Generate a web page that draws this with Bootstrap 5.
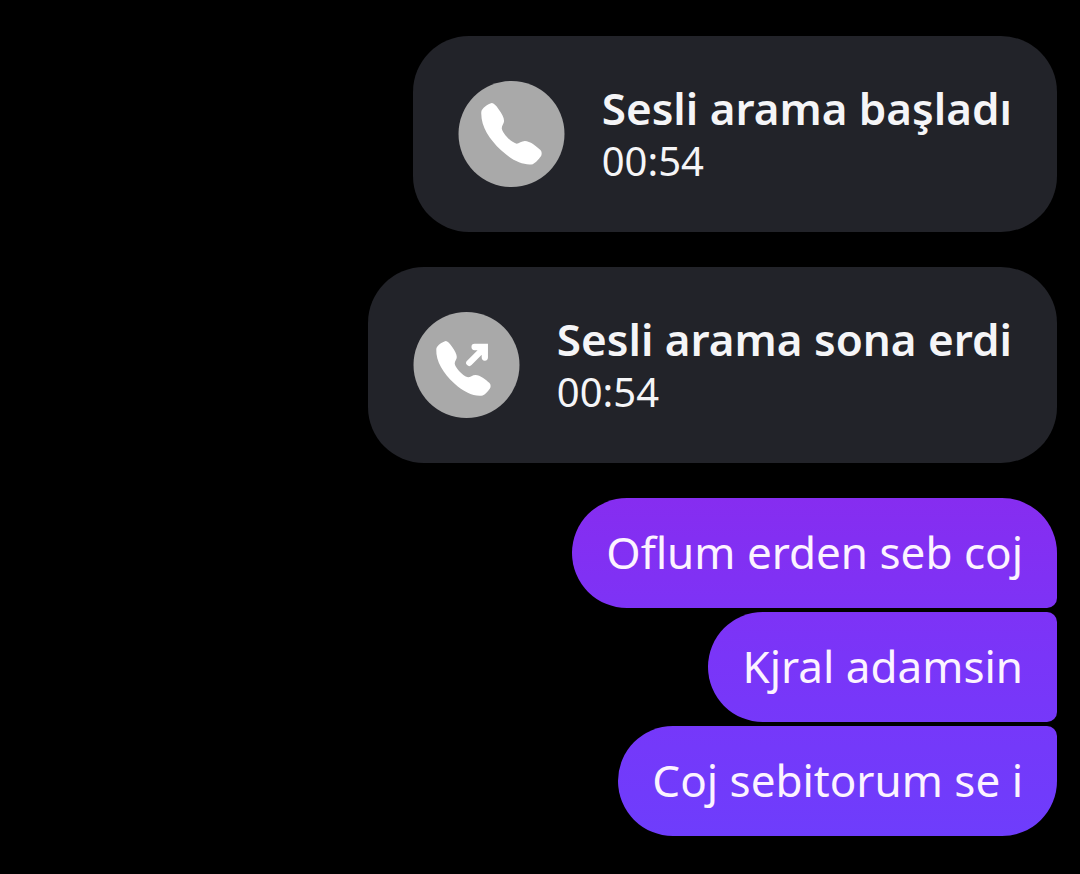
<!DOCTYPE html>
<html lang="tr" data-bs-theme="dark">
<head>
<meta charset="utf-8">
<meta name="viewport" content="width=device-width, initial-scale=1">
<title>Sohbet</title>
<link href="https://cdn.jsdelivr.net/npm/bootstrap@5.3.0/dist/css/bootstrap.min.css" rel="stylesheet">
<style>
  body { background: #000; font-family: "Noto Sans", sans-serif; color: #f5f5f7; }
  .chat-thread { padding: 36px 23px; gap: 35px; }
  .call-bubble { background: #222329; border-radius: 56px; padding: 45px; gap: 37px; }
  .call-icon { width: 107px; height: 106px; }
  .call-title { font-size: 44px; line-height: 54px; font-weight: 600; }
  .call-time { font-size: 40px; line-height: 52px; }
  .bubble-group { gap: 4px; }
  /* One gradient runs through all the sent bubbles */
  .sent-bubble {
    background: linear-gradient(#862df0 57%, #7a35f8 75%, #6e3dfc 96%) fixed;
    color: #fcf3ff; font-size: 44px; line-height: 60px; padding: 24px 34px 26px;
    border-radius: 55px 10px 10px 55px;
  }
  .sent-bubble:first-child { border-top-right-radius: 55px; }
  .sent-bubble:last-child { border-bottom-right-radius: 55px; }
</style>
</head>
<body>
<main class="chat-thread d-flex flex-column align-items-end">
  <article class="call-bubble d-flex align-items-center">
    <svg class="call-icon flex-shrink-0" viewBox="45 31 321 321" aria-hidden="true">
      <circle cx="205.500" cy="191.500" r="160.500" fill="#a9a9a9"/>
      <path id="handset" fill="#fff" d="M146 98C152 98 158 105 167 117C176 130 183 141 183 152C183 160 176 165 176 174C176 184 200 216 221 221C228 221 236 213 246 213C262 213 280 229 293 240C298 245 298 255 294 260C288 268 278 280 270 283C240 287 208 272 174 241C138 207 112 168 114 125C115 114 134 101 146 98Z"/>
    </svg>
    <div>
      <div class="call-title">Sesli arama başladı</div>
      <div class="call-time">00:54</div>
    </div>
  </article>

  <article class="call-bubble d-flex align-items-center">
    <svg class="call-icon flex-shrink-0" viewBox="39 33 321 321" aria-hidden="true">
      <circle cx="199.500" cy="193.500" r="160.500" fill="#a9a9a9"/>
      <use href="#handset" transform="translate(5.4 33.5) scale(.9 .893)"/>
      <path d="M208 187L251 144M224 139H255V171" fill="none" stroke="#fff" stroke-width="19" stroke-linecap="round"/>
    </svg>
    <div>
      <div class="call-title">Sesli arama sona erdi</div>
      <div class="call-time">00:54</div>
    </div>
  </article>

  <section class="bubble-group d-flex flex-column align-items-end">
    <div class="sent-bubble">Oflum erden seb coj</div>
    <div class="sent-bubble">Kjral adamsin</div>
    <div class="sent-bubble">Coj sebitorum se i</div>
  </section>
</main>
<script src="https://cdn.jsdelivr.net/npm/bootstrap@5.3.0/dist/js/bootstrap.bundle.min.js"></script>
</body>
</html>
